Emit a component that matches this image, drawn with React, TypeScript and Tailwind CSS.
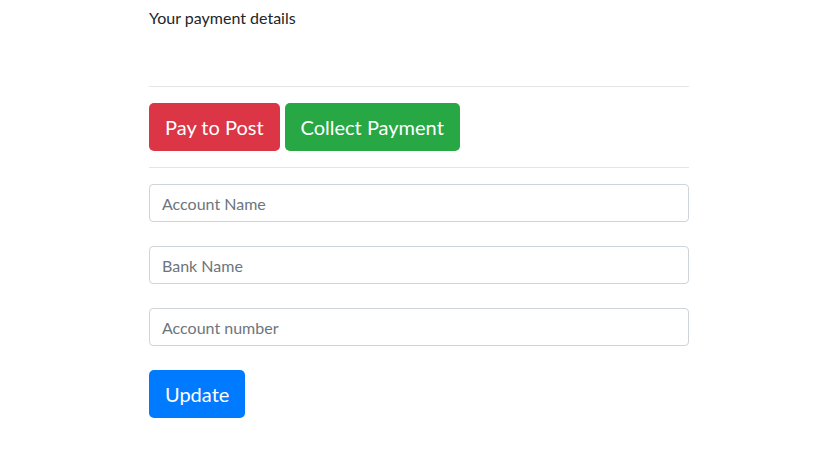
export default function App() {
  return (
    <div className="min-h-screen bg-white text-[#212529]" style={{ fontFamily: 'Lato, "Noto Sans", sans-serif' }}>
      <div className="w-[540px] ml-[149px]">
        <p className="pt-[6px] text-[16px] leading-6">Your payment details</p>
        <hr className="mt-[56px] border-t border-[#e5e5e5]" />
        <div className="flex gap-[5px] mt-4">
          <button className="h-12 px-4 rounded-[5px] bg-[#dc3545] text-white text-[20px]">Pay to Post</button>
          <button className="h-12 px-4 rounded-[5px] bg-[#28a745] text-white text-[20px]">Collect Payment</button>
        </div>
        <hr className="mt-4 border-t border-[#e5e5e5]" />
        <div className="flex flex-col gap-6 mt-4">
          {["Account Name", "Bank Name", "Account number"].map((p) => (
            <input
              key={p}
              placeholder={p}
              className="h-[38px] w-full px-3 rounded border border-[#ced4da] text-[16px] placeholder:text-[#6c757d] outline-none"
            />
          ))}
        </div>
        <button className="mt-6 h-12 px-4 rounded-[5px] bg-[#007bff] text-white text-[20px]">Update</button>
      </div>
    </div>
  );
}
